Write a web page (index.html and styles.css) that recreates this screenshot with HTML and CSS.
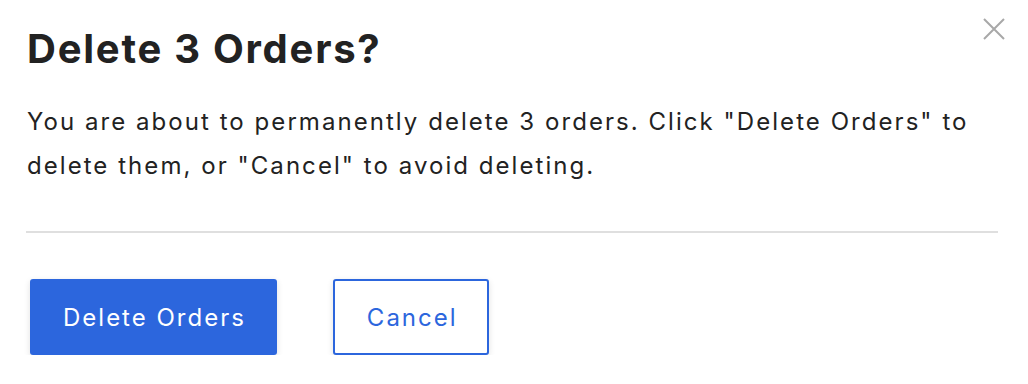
FILE: index.html
```html
<!DOCTYPE html>
<html>
<head>
<meta charset="utf-8">
<link rel="stylesheet" href="styles.css">
</head>
<body>
<div class="dialog">
  <button class="close" aria-label="Close">
    <svg width="22" height="22" viewBox="0 0 22 22"><path d="M1 1L21 21M21 1L1 21" stroke="#a8a8a8" stroke-width="2" fill="none"/></svg>
  </button>
  <h1 class="title">Delete 3 Orders?</h1>
  <p class="message">You are about to permanently delete 3 orders. Click "Delete Orders" to delete them, or "Cancel" to avoid deleting.</p>
  <hr class="divider">
  <div class="actions">
    <button class="btn btn-primary">Delete Orders</button>
    <button class="btn btn-secondary">Cancel</button>
  </div>
</div>
</body>
</html>
```
FILE: styles.css
```css
html, body {
  margin: 0;
  padding: 0;
  background: #fff;
}
body {
  font-family: Inter, "Noto Sans", sans-serif;
  color: #222;
}
.dialog {
  position: relative;
  width: 972px;
  padding: 25px 30px 0 26px;
}
.close {
  position: absolute;
  top: 18px;
  right: 23px;
  padding: 0;
  border: 0;
  background: none;
  width: 22px;
  height: 22px;
  cursor: pointer;
}
.close svg { display: block; }
.title {
  margin: 0 0 0 1px;
  font-size: 40px;
  line-height: 48px;
  font-weight: 700;
  letter-spacing: 1.75px;
  color: #222;
}
.message {
  margin: 27px 0 0 1px;
  font-size: 24px;
  line-height: 44px;
  letter-spacing: 2.05px;
  color: #222;
}
.divider {
  margin: 43px 0 0;
  border: 0;
  height: 2px;
  background: #dfdfdf;
}
.actions {
  display: flex;
  gap: 56px;
  margin-top: 46px;
  padding-left: 4px;
}
.btn {
  font-family: Inter, "Noto Sans", sans-serif;
  font-size: 24px;
  letter-spacing: 2px;
  height: 76px;
  border-radius: 3px;
  box-sizing: border-box;
  box-shadow: 0 2px 6px rgba(0,0,0,0.12);
  cursor: pointer;
}
.btn-primary {
  background: #2c66dd;
  color: #fff;
  border: 0;
  padding: 0 31px 0 33px;
}
.btn-secondary {
  background: #fff;
  color: #2c66dd;
  border: 2px solid #2c66dd;
  padding: 0 29px 0 32px;
}
```
